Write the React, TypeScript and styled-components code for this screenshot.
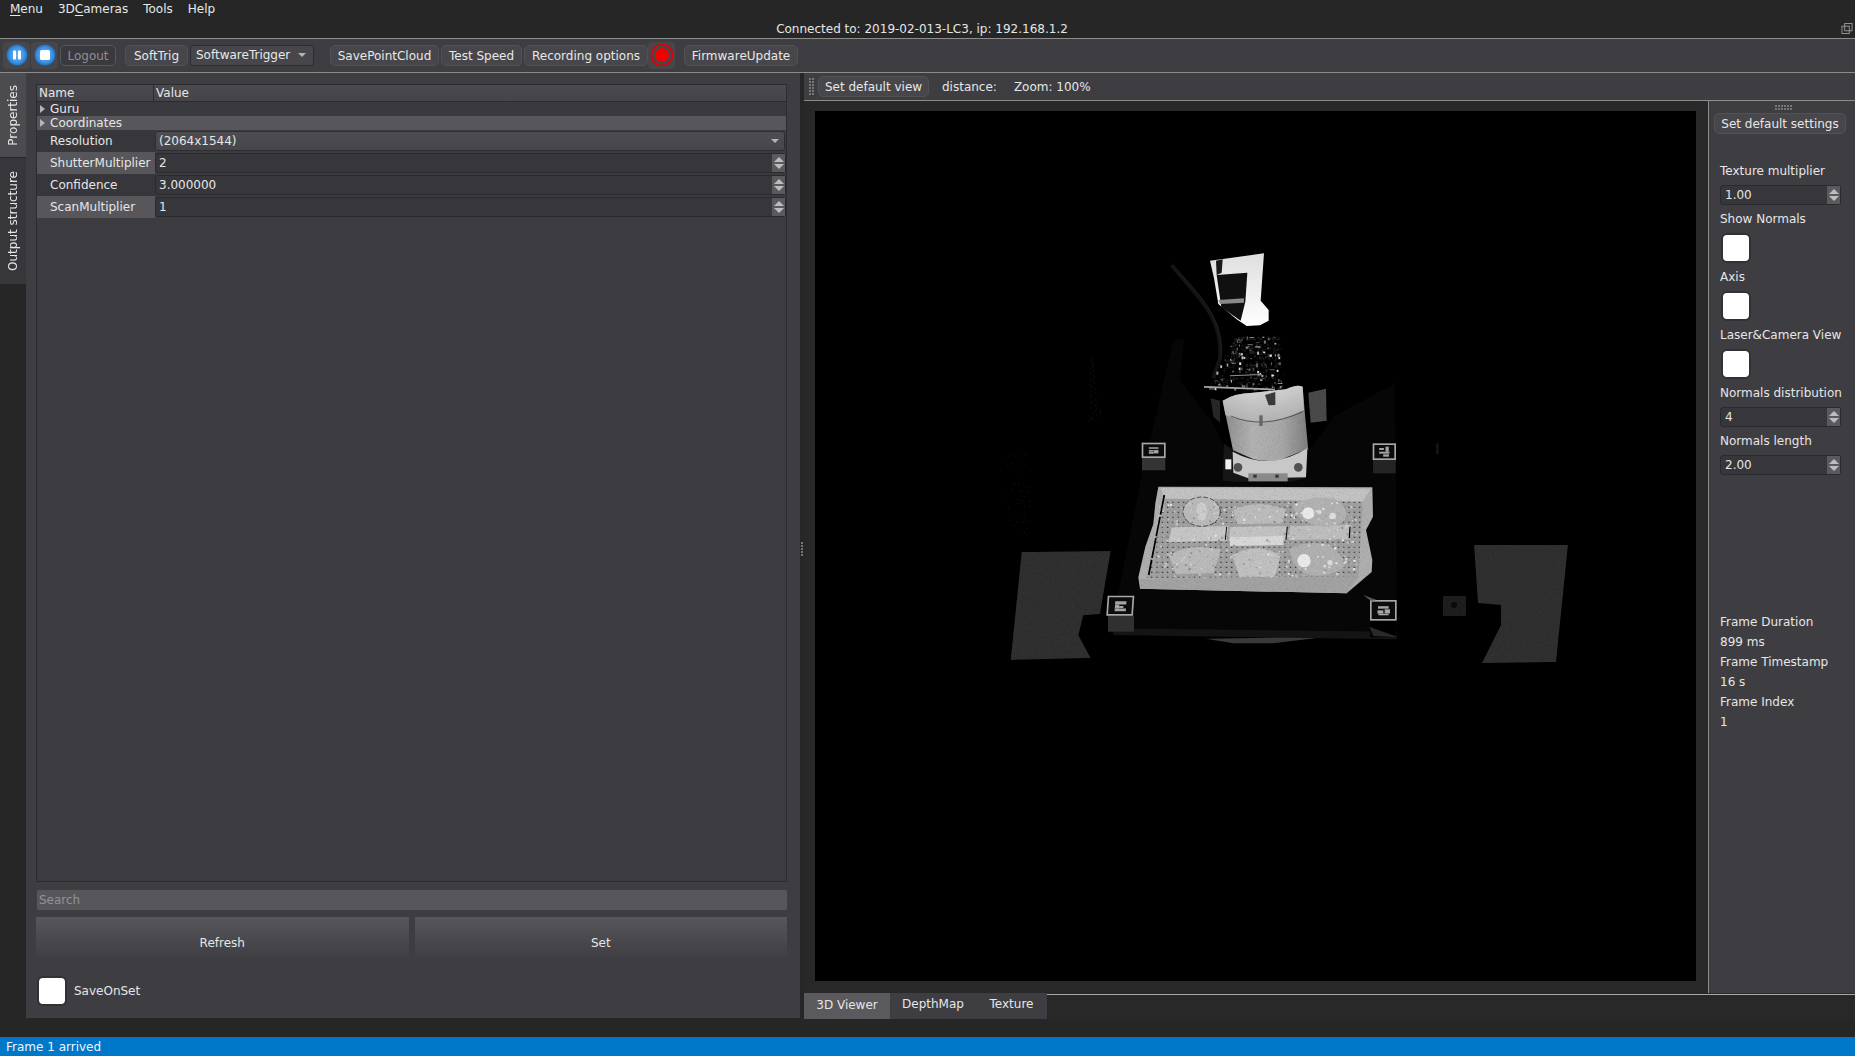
import React from "react";
import styled, { createGlobalStyle } from "styled-components";

const Global = createGlobalStyle`
  html, body { margin: 0; padding: 0; background: #262626; overflow: hidden; }
  * { box-sizing: border-box; }
`;

const Shell = styled.div`
  width: 1855px; height: 1056px; display: flex; flex-direction: column;
  background: #262626; color: #e6e6e6;
  font: 12px/1 "DejaVu Sans", sans-serif;
`;
const MenuBar = styled.div`
  height: 19px; display: flex; align-items: center; gap: 15px; padding: 0 0 2px 10px;
  color: #e8e8e8;
  u { text-underline-offset: 2px; }
`;
const TitleRow = styled.div`
  height: 20px; display: flex; align-items: center; justify-content: center; position: relative;
  border-bottom: 1px solid #8c8c8c; padding: 0 11px 0 0;
`;
const FloatIcon = styled.svg`
  position: absolute; right: 2px; top: 4px; width: 12px; height: 11px;
`;
const Toolbar = styled.div`
  height: 34px; display: flex; align-items: center; padding: 0 0 1px 3px;
  background: #3e3d42; border-bottom: 1px solid #8c8c8c;
`;
const IconTool = styled.div<{ $gap?: number }>`
  width: 27px; height: 27px; display: flex; align-items: center; justify-content: center;
  background: #47464b; border-radius: 4px; margin-right: ${p => p.$gap ?? 1}px;
`;
const ToolButton = styled.div<{ $w: number; $gap?: number; $off?: boolean }>`
  width: ${p => p.$w}px; height: 21px; margin-right: ${p => p.$gap ?? 2}px; padding-top: 1px;
  display: flex; align-items: center; justify-content: center;
  background: ${p => p.$off ? "#3a393e" : "#47464b"};
  border: 1px solid ${p => p.$off ? "#58575c" : "#525156"}; border-radius: 5px;
  color: ${p => p.$off ? "#8e8e92" : "#e8e8e8"};
  white-space: nowrap;
`;
const ToolCombo = styled.div`
  width: 124px; height: 21px; margin-right: 16px; padding: 0 7px 1px 5px;
  display: flex; align-items: center; justify-content: space-between;
  background: #47464b; border: 1px solid #2e2d31; border-radius: 3px; color: #e8e8e8;
`;
const DownTri = styled.i`
  width: 0; height: 0; border-left: 4px solid transparent; border-right: 4px solid transparent;
  border-top: 4px solid #b4b4b6;
`;
const Main = styled.div`
  flex: 1; display: flex; min-height: 0;
`;
const SideTabs = styled.div`
  width: 26px; height: 945px; display: flex; flex-direction: column; flex: none;
`;
const SideTab = styled.div<{ $h: number; $on?: boolean }>`
  height: ${p => p.$h}px; display: flex; align-items: center; justify-content: center;
  background: ${p => p.$on ? "#4c4b50" : "#37363b"};
  margin-bottom: 1px;
  span { writing-mode: vertical-rl; transform: rotate(180deg); white-space: nowrap; }
`;
const Dock = styled.div`
  width: 774px; height: 945px; flex: none; background: #3e3d42;
  display: flex; flex-direction: column; padding: 11px 13px 12px 10px;
`;
const Table = styled.div`
  flex: 1; border: 1px solid #2c2b2f; background: #3c3b40; display: flex; flex-direction: column;
`;
const HeadRow = styled.div`
  height: 17px; flex: none; display: flex; background: linear-gradient(#4b4a4f, #454449);
  border-bottom: 1px solid #2c2b2f;
`;
const HeadCell = styled.div<{ $w?: number }>`
  ${p => p.$w ? `width:${p.$w}px;border-right:1px solid #2c2b2f;` : "flex:1;"}
  padding-left: 2px; display: flex; align-items: center;
`;
const GroupRow = styled.div<{ $alt?: boolean }>`
  height: 14px; flex: none; display: flex; align-items: center; padding-left: 3px; gap: 5px;
  background: ${p => p.$alt ? "#57565b" : "#3a393e"};
`;
const RightTri = styled.i`
  width: 0; height: 0; border-top: 4px solid transparent; border-bottom: 4px solid transparent;
  border-left: 5px solid #b4b4b6; margin-right: 0;
`;
const PropRow = styled.div`
  height: 22px; flex: none; display: flex;
`;
const PropName = styled.div<{ $alt?: boolean }>`
  width: 118px; flex: none; display: flex; align-items: center; padding: 0 0 1px 13px;
  background: ${p => p.$alt ? "#57565b" : "#37363b"}; white-space: nowrap;
`;
const PropCombo = styled.div`
  flex: 1; margin: 1px 1px 1px 0; height: 20px; display: flex; align-items: center;
  justify-content: space-between; padding: 0 5px 0 3px;
  background: linear-gradient(#4e4d52, #47464b); border: 1px solid #2e2d31; border-radius: 3px;
`;
const Spin = styled.div<{ $w?: number; $pad?: number }>`
  ${p => p.$w ? `width:${p.$w}px;` : "flex:1;"}
  height: 20px; margin: ${p => p.$w ? 0 : "1px 0 1px 0"}; display: flex; align-items: center;
  background: #37363b; border: 1px solid #2a292d; border-radius: 3px;
  span { flex: 1; padding-left: ${p => p.$pad ?? 3}px; }
`;
const Stepper = styled.div`
  width: 13px; align-self: stretch; display: flex; flex-direction: column; align-items: center;
  justify-content: center; gap: 2px; background: #5a595e;
`;
const UpTri = styled.i`
  width: 0; height: 0; border-left: 5px solid transparent; border-right: 5px solid transparent;
  border-bottom: 5px solid #bdbdbf;
`;
const DnTri = styled(UpTri)`
  border-bottom: none; border-top: 5px solid #bdbdbf;
`;
const SearchBox = styled.div`
  height: 20px; flex: none; margin: 8px 0 7px 1px; background: #57565b; border-radius: 2px;
  display: flex; align-items: center; padding-left: 2px; color: #929296;
`;
const ActionRow = styled.div`
  height: 50px; flex: none; display: flex; gap: 6px;
`;
const ActionButton = styled.div`
  flex: 1; display: flex; align-items: center; justify-content: center; padding-top: 2px;
  background: linear-gradient(#57565b, #3e3d42 85%);
`;
const CheckRow = styled.div`
  flex: none; margin-top: 9px; display: flex; align-items: center; gap: 7px; padding-left: 1px;
`;
const Check = styled.div`
  width: 30px; height: 30px; flex: none; background: #fff; border: 2px solid #323135; border-radius: 6px;
`;
const Splitter = styled.div`
  width: 4px; height: 945px; flex: none; display: flex; align-items: center; justify-content: center;
  padding-top: 8px;
`;
const ViewerCol = styled.div`
  flex: 1; display: flex; flex-direction: column; min-width: 0;
`;
const ViewBar = styled.div`
  height: 28px; flex: none; display: flex; align-items: center; padding: 0 0 0 5px;
  background: #3e3d42; border-bottom: 1px solid #8c8c8c;
`;
const ViewLabel = styled.span<{ $l: number }>`
  margin-left: ${p => p.$l}px; white-space: nowrap;
`;
const ViewBody = styled.div`
  height: 892px; flex: none; display: flex;
`;
const CanvasWrap = styled.div`
  width: 904px; flex: none; background: #282828; padding: 10px 12px 11px 11px; display: flex;
`;
const Picture = styled.svg`
  display: block; width: 881px; height: 870px; background: #000;
`;
const SidePanel = styled.div`
  flex: 1; background: #3e3d42; border-left: 1px solid #8c8c8c;
  display: flex; flex-direction: column; padding: 0 0 0 11px;
`;
const GripRow = styled.div`
  align-self: center; margin: 4px 0 0 -8px; flex: none;
`;
const SideButton = styled.div`
  width: 132px; height: 21px; margin: 2px 0 0 -6px; flex: none; display: flex; align-items: center; justify-content: center;
  background: #47464b; border: 1px solid #525156; border-radius: 5px; white-space: nowrap;
`;
const FieldLabel = styled.div<{ $t?: number }>`
  height: 18px; flex: none; margin-top: ${p => p.$t ?? 5}px; padding-top: 1px;
  display: flex; align-items: center; white-space: nowrap;
`;
const SideControl = styled.div<{ $t?: number; $l?: number }>`
  flex: none; margin: ${p => p.$t ?? 6}px 0 0 ${p => p.$l ?? 0}px; display: flex;
`;
const InfoLine = styled.div<{ $t?: number }>`
  height: 20px; flex: none; margin-top: ${p => p.$t ?? 0}px; display: flex; align-items: center;
`;
const TabRow = styled.div`
  height: 26px; flex: none; display: flex; background: #282828;
`;
const ViewTab = styled.div<{ $w: number; $on?: boolean }>`
  width: ${p => p.$w}px; display: flex; align-items: center; justify-content: center;
  background: ${p => p.$on ? "#5a595e" : "#3e3d42"}; padding-bottom: ${p => p.$on ? 2 : 4}px;
`;
const TabLine = styled.div`
  flex: 1; border-top: 1px solid #a8a8a8; margin-top: 1px;
`;
const Status = styled.div`
  height: 19px; flex: none; background: #0078c9; display: flex; align-items: center; padding-left: 6px; color: #eef6fc;
`;

const Round = ({ kind }: { kind: "pause" | "stop" }) => (
  <svg width="22" height="22" viewBox="0 0 22 22">
    <defs>
      <radialGradient id={"rg" + kind} cx="50%" cy="50%" r="50%">
        <stop offset="0%" stopColor="#69b4f2" />
        <stop offset="70%" stopColor="#3f94e4" />
        <stop offset="100%" stopColor="#1f6fc0" />
      </radialGradient>
    </defs>
    <circle cx="11" cy="11" r="10.5" fill={"url(#rg" + kind + ")"} />
    {kind === "pause" ? (
      <g fill="#fff"><rect x="7" y="6.5" width="3" height="9" rx=".8" /><rect x="12" y="6.5" width="3" height="9" rx=".8" /></g>
    ) : (
      <rect x="6" y="6" width="10" height="10" rx="1.5" fill="#fff" />
    )}
  </svg>
);

const Dots = ({ cols, rows }: { cols: number; rows: number }) => (
  <svg width={cols * 3} height={rows * 3} viewBox={`0 0 ${cols * 3} ${rows * 3}`} style={{ display: "block", flex: "none" }}>
    {Array.from({ length: cols * rows }, (_, i) => (
      <rect key={i} x={(i % cols) * 3} y={Math.floor(i / cols) * 3} width="2" height="2" fill="#77767a" />
    ))}
  </svg>
);

const SpinArrows = () => <Stepper><UpTri /><DnTri /></Stepper>;

/* seeded pseudo random so the drawing is steady */
const rng = (seed: number) => () => {
  seed = (seed * 16807) % 2147483647;
  return (seed - 1) / 2147483646;
};

const clutter = (() => {
  const r = rng(98213);
  const out: { x: number; y: number; w: number; h: number; c: string }[] = [];
  for (let i = 0; i < 420; i++) {
    const y = 318 + r() * 160;
    const t = (y - 318) / 160;
    const left = 705 - t * 85;
    const right = 835 + t * 20;
    const x = left + r() * (right - left);
    const wide = r() > 0.75;
    const k = r();
    const v = Math.floor(18 + k * k * k * k * k * 220);
    out.push({ x, y, w: wide ? 5 + r() * 14 : 2 + r() * 5, h: wide ? 2 + r() * 2 : 2 + r() * 8, c: `rgb(${v},${v},${v})` });
  }
  return out;
})();

const specks = (() => {
  const r = rng(77);
  const list: { x: number; y: number; c: string }[] = [];
  for (let i = 0; i < 70; i++) list.push({ x: 268 + r() * 36 * (1 - i / 90), y: 570 - (i / 70) * 190, c: "#141414" });
  for (let i = 0; i < 50; i++) list.push({ x: 20 + r() * 70, y: 670 + r() * 240, c: "#161616" });
  return list;
})();

const trayBits = (() => {
  const r = rng(4242);
  return Array.from({ length: 520 }, () => {
    const v = Math.floor(140 + r() * 100);
    return { x: 470 + r() * 600, y: 815 + r() * 225, s: 2 + r() * 5, c: `rgb(${v},${v},${v})` };
  });
})();

const Fiducial = ({ x, y, w, h, skew = 0, box, cells }: { x: number; y: number; w: number; h: number; skew?: number; box: string; cells: number[][] }) => (
  <g transform={`translate(${x} ${y})`}>
    <rect x="1" y={h} width={w - 2} height={h * 0.8} fill={box} />
    <g transform={`skewX(${skew})`}>
      <rect x="0" y="0" width={w} height={h} fill="#a8a8a8" />
      <rect x="5" y="5" width={w - 10} height={h - 10} fill="#0c0c0c" />
      {cells.map((c, i) => (
        <rect key={i} x={w * c[0]} y={h * c[1]} width={w * c[2]} height={h * c[3]} fill="#a4a4a4" />
      ))}
    </g>
  </g>
);

const DepthView = () => (
  <Picture viewBox="815 111 881 870">
    <defs>
      <filter id="grain" x="0" y="0" width="100%" height="100%">
        <feTurbulence type="fractalNoise" baseFrequency="0.8" numOctaves="2" seed="4" result="n" />
        <feColorMatrix in="n" type="matrix" values="0 0 0 0 1  0 0 0 0 1  0 0 0 0 1  1.4 0 0 0 -0.55" result="a" />
        <feFlood floodColor="#000" floodOpacity="0.28" />
        <feComposite in2="a" operator="in" />
        <feComposite in2="SourceAlpha" operator="in" result="dark" />
        <feMerge><feMergeNode in="SourceGraphic" /><feMergeNode in="dark" /></feMerge>
      </filter>
      <linearGradient id="cyl" x1="0" x2="1" y1="0" y2="0">
        <stop offset="0" stopColor="#8e8e8e" />
        <stop offset=".35" stopColor="#b4b4b4" />
        <stop offset=".7" stopColor="#a8a8a8" />
        <stop offset="1" stopColor="#808080" />
      </linearGradient>
      <linearGradient id="cylTop" x1="0" x2="0" y1="0" y2="1">
        <stop offset="0" stopColor="#e2e2e2" />
        <stop offset="1" stopColor="#b4b4b4" />
      </linearGradient>
      <linearGradient id="block" x1="0" x2="0" y1="0" y2="1">
        <stop offset="0" stopColor="#dedede" />
        <stop offset="1" stopColor="#ffffff" />
      </linearGradient>
      <pattern id="holes" width="16" height="15" patternUnits="userSpaceOnUse">
        <rect x="5" y="5" width="4" height="4" fill="#3c3c3c" />
      </pattern>
    </defs>
    <g transform="translate(1000 230) scale(0.33333)">
      {specks.map((s, i) => <rect key={i} x={s.x} y={s.y} width="3" height="3" fill={s.c} />)}
      {/* bench */}
      <polygon points="520,330 552,325 540,450 640,580 672,650 930,660 1000,560 1185,460 1192,1228 330,1212 425,740" fill="#060606" />
      {/* slabs */}
      <polygon points="65,966 332,963 300,1152 250,1156 235,1216 272,1284 32,1290" fill="#303030" filter="url(#grain)" />
      <polygon points="618,1226 760,1224 1000,1218 820,1240 700,1240" fill="#3a3a3a" />
      <polygon points="340,1195 1190,1205 1190,1228 340,1215" fill="#141414" />
      {/* cable */}
      <path d="M515 105 C 590 200 672 260 660 385 L 640 445" fill="none" stroke="#141414" strokeWidth="12" />
      <path d="M540 130 C 610 205 668 270 664 380" fill="none" stroke="#262626" strokeWidth="2" />
      {/* camera block */}
      <polygon points="630,92 792,70 782,212 806,240 806,272 780,286 740,288 710,268 655,222 642,145" fill="url(#block)" />
      <polygon points="650,135 742,128 736,215 722,272 664,232" fill="#101010" />
      <polygon points="655,210 732,205 732,218 660,222" fill="#8a8a8a" />
      <polygon points="648,92 668,88 665,128 650,135" fill="#1a1a1a" />
      {/* robot wrist clutter */}
      {clutter.map((c, i) => <rect key={i} x={c.x} y={c.y} width={c.w} height={c.h} fill={c.c} />)}
      <polygon points="612,468 825,476 825,481 612,473" fill="#a8a8a8" />
      <polygon points="690,436 785,432 785,435 690,439" fill="#909090" />
      {/* tag and side strips */}
      <polygon points="925,488 978,476 980,572 932,578" fill="#4c4c4c" filter="url(#grain)" />
      <polygon points="632,505 660,512 660,578 640,560" fill="#2c2c2c" filter="url(#grain)" />
      {/* robot body */}
      <path d="M668 512 Q 700 490 760 488 L 858 478 Q 890 462 908 470 L 915 555 L 925 662 Q 810 722 700 665 Z" fill="url(#cyl)" filter="url(#grain)" />
      <path d="M668 512 Q 700 490 760 488 L 858 478 Q 890 462 908 470 L 912 540 Q 790 600 676 555 Z" fill="url(#cylTop)" opacity=".75" />
      <path d="M692 558 Q 790 600 908 545" fill="none" stroke="#2c2c2c" strokeWidth="2" />
      <rect x="778" y="556" width="10" height="32" fill="#666" />
      <polygon points="795,495 826,486 826,525 806,526" fill="#3a3a3a" />
      {/* flange */}
      <polygon points="672,640 698,660 800,705 925,656 918,745 870,755 700,755 668,752" fill="#161616" />
      <path d="M698 665 Q 810 725 922 655 L 918 742 L 745 745 L 700 728 Z" fill="#c8c8c8" />
      <rect x="676" y="688" width="18" height="30" fill="#f0f0f0" />
      <circle cx="714" cy="712" r="13" fill="#505050" />
      <circle cx="895" cy="712" r="13" fill="#505050" />
      <rect x="745" y="730" width="118" height="24" fill="#8a8a8a" />
      <rect x="760" y="734" width="10" height="9" fill="#333" />
      <rect x="826" y="734" width="10" height="9" fill="#333" />
      {/* tray */}
      <g filter="url(#grain)">
        <polygon points="475,770 1117,772 1119,860 1098,900 1117,990 1115,1026 1040,1090 420,1076 415,1042 436,950 460,882 466,820" fill="#b0b0b0" />
        <polygon points="482,774 1112,776 1088,815 495,806" fill="#c4c4c4" />
        <polygon points="495,806 1088,815 1075,1040 440,1044" fill="#a2a2a2" />
        <polygon points="495,806 1088,815 1075,1040 440,1044" fill="url(#holes)" />
        <polygon points="420,1046 1076,1040 1040,1090 420,1076" fill="#a4a4a4" />
        <polygon points="515,892 685,888 680,932 505,936" fill="#c8c8c8" />
        <polygon points="690,890 860,888 856,930 686,932" fill="#c4c4c4" />
        <polygon points="870,888 1055,885 1050,928 866,930" fill="#c0c0c0" />
        <polygon points="690,922 850,918 850,945 690,948" fill="#dadada" />
        <ellipse cx="605" cy="845" rx="56" ry="44" fill="#bcbcbc" stroke="#1c1c1c" strokeWidth="2" strokeDasharray="14 6" />
        <ellipse cx="605" cy="845" rx="16" ry="28" fill="#d0d0d0" />
        <path d="M700 840 Q 770 805 858 838 L 846 880 L 712 882 Z" fill="#bebebe" />
        <path d="M506 975 Q 580 935 662 962 L 640 1030 L 528 1032 Z" fill="#bcbcbc" />
        <path d="M696 975 Q 770 935 842 975 L 826 1040 L 718 1040 Z" fill="#c2c2c2" />
        <path d="M880 825 Q 930 795 1000 805 Q 1050 830 1035 870 Q 990 905 930 880 Q 880 860 880 825Z" fill="#b4b4b4" />
        <path d="M868 955 Q 930 930 990 945 Q 1045 990 1030 1015 Q 970 1050 910 1030 Q 870 1000 868 955Z" fill="#b2b2b2" />
        {trayBits.map((b, i) => <rect key={i} x={b.x} y={b.y} width={b.s} height={b.s} fill={b.c} />)}
        <circle cx="925" cy="850" r="18" fill="#ececec" />
        <circle cx="998" cy="858" r="10" fill="#e0e0e0" />
        <circle cx="958" cy="846" r="7" fill="#dcdcdc" />
        <circle cx="912" cy="992" r="20" fill="#ececec" />
        <circle cx="990" cy="998" r="8" fill="#dedede" />
        <line x1="493" y1="795" x2="446" y2="1035" stroke="#000" strokeWidth="5" strokeDasharray="60 6" />
        <line x1="680" y1="890" x2="676" y2="930" stroke="#111" strokeWidth="3" />
        <line x1="862" y1="890" x2="858" y2="930" stroke="#111" strokeWidth="3" />
        <line x1="1050" y1="890" x2="1048" y2="925" stroke="#111" strokeWidth="4" />
      </g>
      {/* markers */}
      <Fiducial x={425} y={638} w={72} h={46} box="#343434" cells={[[.3, .3, .4, .1], [.3, .48, .18, .1], [.5, .48, .2, .22], [.3, .6, .2, .12]]} />
      <Fiducial x={1118} y={640} w={70} h={50} box="#242424" cells={[[.28, .28, .2, .12], [.55, .2, .14, .3], [.28, .5, .44, .12], [.45, .66, .25, .14]]} />
      <Fiducial x={323} y={1097} w={80} h={60} skew={-4} box="#303030" cells={[[.3, .28, .42, .16], [.3, .44, .16, .2], [.46, .52, .16, .1], [.3, .64, .42, .14]]} />
      <Fiducial x={1110} y={1110} w={80} h={62} box="#000" cells={[[.3, .3, .4, .12], [.28, .5, .22, .16], [.55, .45, .2, .2], [.32, .66, .38, .08]]} />
      <polygon points="1090,1095 1130,1110 1112,1112" fill="#555" />
      <polygon points="1108,1190 1195,1222 1120,1218" fill="#2a2a2a" />
      <rect x="1308" y="640" width="8" height="32" fill="#141414" />
    </g>
    {/* right side slab, with the small plate left of it */}
    <polygon points="1474,545 1568,545 1556,662 1482,663 1501,625 1501,605 1478,603" fill="#303030" filter="url(#grain)" />
    <rect x="1443" y="596" width="23" height="20" fill="#222" filter="url(#grain)" />
    <circle cx="1454" cy="605" r="3" fill="#0a0a0a" />
  </Picture>
);

export default function App() {
  return (
    <Shell>
      <Global />
      <MenuBar>
        <span><u>M</u>enu</span>
        <span>3D<u>C</u>ameras</span>
        <span>Tools</span>
        <span>Help</span>
      </MenuBar>
      <TitleRow>
        Connected to: 2019-02-013-LC3, ip: 192.168.1.2
        <FloatIcon viewBox="0 0 12 12" fill="none" stroke="#9a9a9a" strokeWidth="1">
          <rect x="3.5" y="0.5" width="8" height="8" />
          <rect x="0.5" y="3.5" width="8" height="8" />
        </FloatIcon>
      </TitleRow>
      <Toolbar>
        <IconTool><Round kind="pause" /></IconTool>
        <IconTool $gap={2}><Round kind="stop" /></IconTool>
        <ToolButton $w={56} $off $gap={9}>Logout</ToolButton>
        <ToolButton $w={63} $gap={2}>SoftTrig</ToolButton>
        <ToolCombo>SoftwareTrigger<DownTri /></ToolCombo>
        <ToolButton $w={109}>SavePointCloud</ToolButton>
        <ToolButton $w={81}>Test Speed</ToolButton>
        <ToolButton $w={124} $gap={0}>Recording options</ToolButton>
        <IconTool $gap={9}>
          <svg width="24" height="24" viewBox="0 0 24 24">
            <circle cx="12" cy="12" r="10.5" fill="none" stroke="#e00000" strokeWidth="1.6" />
            <circle cx="12" cy="12" r="7" fill="#f20000" />
          </svg>
        </IconTool>
        <ToolButton $w={114}>FirmwareUpdate</ToolButton>
      </Toolbar>
      <Main>
        <SideTabs>
          <SideTab $h={84} $on><span>Properties</span></SideTab>
          <SideTab $h={126}><span>Output structure</span></SideTab>
        </SideTabs>
        <Dock>
          <Table>
            <HeadRow>
              <HeadCell $w={117}>Name</HeadCell>
              <HeadCell>Value</HeadCell>
            </HeadRow>
            <GroupRow><RightTri />Guru</GroupRow>
            <GroupRow $alt><RightTri />Coordinates</GroupRow>
            <PropRow>
              <PropName>Resolution</PropName>
              <PropCombo>(2064x1544)<DownTri /></PropCombo>
            </PropRow>
            <PropRow>
              <PropName $alt>ShutterMultiplier</PropName>
              <Spin><span>2</span><SpinArrows /></Spin>
            </PropRow>
            <PropRow>
              <PropName>Confidence</PropName>
              <Spin><span>3.000000</span><SpinArrows /></Spin>
            </PropRow>
            <PropRow>
              <PropName $alt>ScanMultiplier</PropName>
              <Spin><span>1</span><SpinArrows /></Spin>
            </PropRow>
          </Table>
          <SearchBox>Search</SearchBox>
          <ActionRow>
            <ActionButton>Refresh</ActionButton>
            <ActionButton>Set</ActionButton>
          </ActionRow>
          <CheckRow><Check />SaveOnSet</CheckRow>
        </Dock>
        <Splitter><Dots cols={1} rows={5} /></Splitter>
        <ViewerCol>
          <ViewBar>
            <Dots cols={2} rows={6} />
            <ToolButton $w={111} $gap={0} style={{ marginLeft: 3 }}>Set default view</ToolButton>
            <ViewLabel $l={13}>distance:</ViewLabel>
            <ViewLabel $l={17}>Zoom: 100%</ViewLabel>
          </ViewBar>
          <ViewBody>
            <CanvasWrap><DepthView /></CanvasWrap>
            <SidePanel>
              <GripRow><Dots cols={6} rows={2} /></GripRow>
              <SideButton>Set default settings</SideButton>
              <FieldLabel $t={27}>Texture multiplier</FieldLabel>
              <SideControl><Spin $w={121} $pad={4}><span>1.00</span><SpinArrows /></Spin></SideControl>
              <FieldLabel $t={4}>Show Normals</FieldLabel>
              <SideControl $l={1} $t={6}><Check /></SideControl>
              <FieldLabel $t={4}>Axis</FieldLabel>
              <SideControl $l={1}><Check /></SideControl>
              <FieldLabel $t={4}>Laser&amp;Camera View</FieldLabel>
              <SideControl $l={1} $t={6}><Check /></SideControl>
              <FieldLabel $t={4}>Normals distribution</FieldLabel>
              <SideControl><Spin $w={121} $pad={4}><span>4</span><SpinArrows /></Spin></SideControl>
              <FieldLabel $t={4}>Normals length</FieldLabel>
              <SideControl><Spin $w={121} $pad={4}><span>2.00</span><SpinArrows /></Spin></SideControl>
              <InfoLine $t={137}>Frame Duration</InfoLine>
              <InfoLine>899 ms</InfoLine>
              <InfoLine>Frame Timestamp</InfoLine>
              <InfoLine>16 s</InfoLine>
              <InfoLine>Frame Index</InfoLine>
              <InfoLine>1</InfoLine>
            </SidePanel>
          </ViewBody>
          <TabRow>
            <ViewTab $w={86} $on>3D Viewer</ViewTab>
            <ViewTab $w={86}>DepthMap</ViewTab>
            <ViewTab $w={71}>Texture</ViewTab>
            <TabLine />
          </TabRow>
        </ViewerCol>
      </Main>
      <Status>Frame 1 arrived</Status>
    </Shell>
  );
}
